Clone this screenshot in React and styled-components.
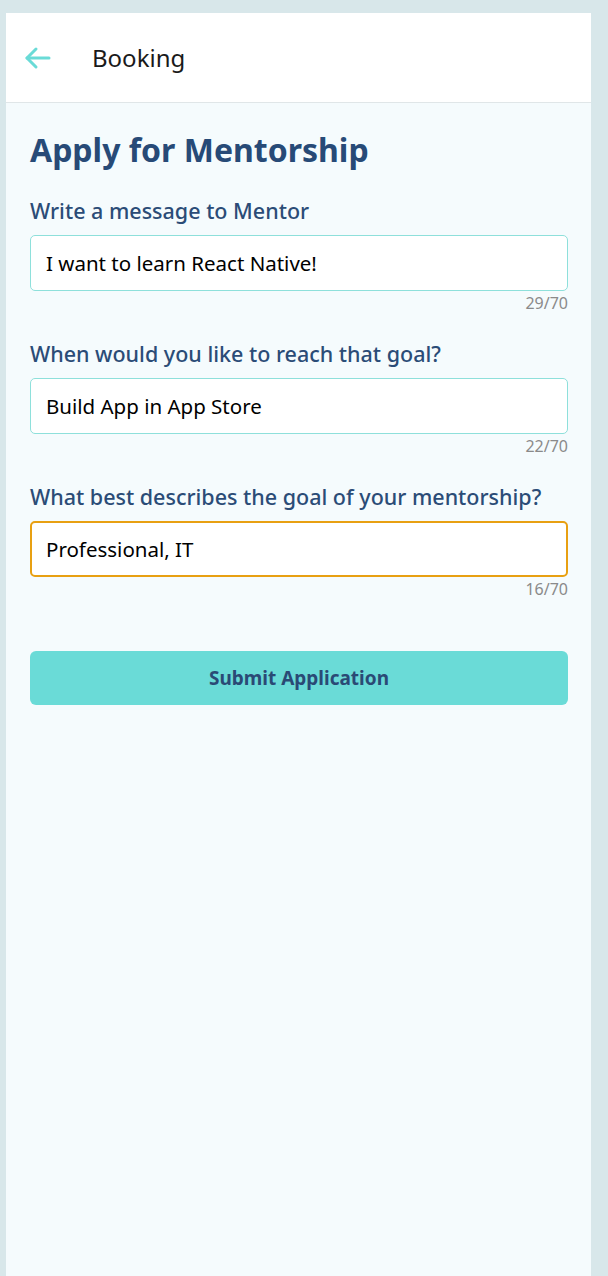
import styled, { createGlobalStyle } from 'styled-components'

const Global = createGlobalStyle`
  html, body {
    margin: 0;
    padding: 0;
    background: #d8e7ea;
    font-family: 'Noto Sans', 'Open Sans', sans-serif;
  }
  * { box-sizing: border-box; }
`

const Panel = styled.div`
  margin: 13px 17px 0 6px;
  min-height: 1263px;
  background: #f5fbfd;
  display: flex;
  flex-direction: column;
`

const Header = styled.header`
  height: 90px;
  background: #ffffff;
  border-bottom: 1px solid #e0e6e8;
  display: flex;
  align-items: center;
  padding-left: 18px;
  gap: 40px;
`

const BackButton = styled.button`
  border: 0;
  background: none;
  padding: 0;
  width: 28px;
  height: 28px;
  display: flex;
  align-items: center;
  justify-content: center;
  cursor: pointer;
`

const HeaderTitle = styled.h1`
  margin: 0;
  font-size: 24px;
  font-weight: 400;
  color: #1a1a1a;
`

const Content = styled.main`
  padding: 25px 23px 0 24px;
  display: flex;
  flex-direction: column;
`

const Title = styled.h2`
  margin: 0 0 25px;
  font-size: 32px;
  line-height: 44px;
  font-weight: 700;
  color: #274a77;
`

const Field = styled.div`
  display: flex;
  flex-direction: column;
  margin-bottom: 25px;
`

const Label = styled.label`
  font-size: 21.5px;
  line-height: 28px;
  font-weight: 500;
  color: #2b4c77;
  margin-bottom: 10px;
`

const Input = styled.input`
  height: 56px;
  border-radius: 5px;
  border: ${p => (p.$focused ? '2px solid #e8a012' : '1px solid #8ee0db')};
  background: #ffffff;
  padding: 0 ${p => (p.$focused ? '14px' : '15px')};
  font-family: inherit;
  font-size: 20.5px;
  color: #000;
  outline: none;
`

const Counter = styled.span`
  align-self: flex-end;
  font-size: 16px;
  line-height: 24px;
  color: #8a8a8a;
`

const Submit = styled.button`
  margin-top: 25px;
  height: 54px;
  border: 0;
  border-radius: 6px;
  background: #6adbd7;
  color: #2a4a75;
  font-family: inherit;
  font-size: 19px;
  font-weight: 700;
  cursor: pointer;
`

const fields = [
  { label: 'Write a message to Mentor', value: 'I want to learn React Native!' },
  { label: 'When would you like to reach that goal?', value: 'Build App in App Store' },
  { label: 'What best describes the goal of your mentorship?', value: 'Professional, IT', focused: true },
]

export default function App() {
  return (
    <>
      <Global />
      <Panel>
        <Header>
          <BackButton aria-label="Back">
            <svg width="28" height="28" viewBox="0 0 28 28" fill="none" stroke="#6adbd7" strokeWidth="3" strokeLinecap="round" strokeLinejoin="round">
              <path d="M25 14H3" />
              <path d="M12 5L3 14l9 9" />
            </svg>
          </BackButton>
          <HeaderTitle>Booking</HeaderTitle>
        </Header>
        <Content>
          <Title>Apply for Mentorship</Title>
          {fields.map(f => (
            <Field key={f.label}>
              <Label>{f.label}</Label>
              <Input defaultValue={f.value} $focused={f.focused} spellCheck={false} />
              <Counter>{f.value.length}/70</Counter>
            </Field>
          ))}
          <Submit>Submit Application</Submit>
        </Content>
      </Panel>
    </>
  )
}
